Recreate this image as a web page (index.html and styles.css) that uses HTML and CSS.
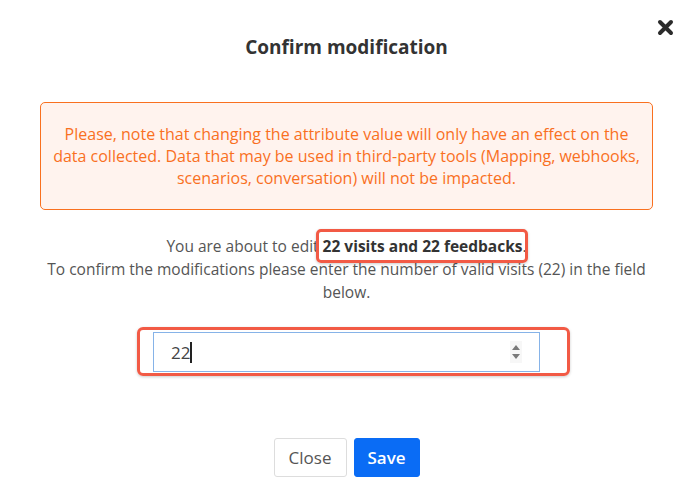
FILE: index.html
```html
<!DOCTYPE html>
<html lang="en">
<head>
  <meta charset="UTF-8">
  <meta name="viewport" content="width=device-width, initial-scale=1.0">
  <title>Confirm modification</title>
  <link rel="stylesheet" href="styles.css">
</head>
<body>
  <div class="modal">
    <button class="close-x" aria-label="Close">
      <svg width="17" height="17" viewBox="0 0 17 17">
        <path d="M3 3 L14 14 M14 3 L3 14" stroke="#2b2b2b" stroke-width="4" stroke-linecap="round"/>
      </svg>
    </button>
    <h2 class="title">Confirm modification</h2>

    <div class="alert">
      Please, note that changing the attribute value will only have an effect on the data collected. Data that may be used in third-party tools (Mapping, webhooks, scenarios, conversation) will not be impacted.
    </div>

    <p class="info">
      You are about to edit <span class="mark"><b>22 visits and 22 feedbacks</b></span>.<br>
      To confirm the modifications please enter the number of valid visits (22) in the field below.
    </p>

    <div class="field">
      <div class="field-mark">
        <div class="input">
          <span class="value">22</span><span class="caret"></span>
          <span class="spin">
            <svg width="10" height="18" viewBox="0 0 10 18">
              <path d="M5 2 L9 7 L1 7 Z M5 16 L9 11 L1 11 Z" fill="#7a7a7a"/>
            </svg>
          </span>
        </div>
      </div>
    </div>

    <div class="actions">
      <button class="btn btn-light">Close</button>
      <button class="btn btn-primary">Save</button>
    </div>
  </div>
</body>
</html>
```

FILE: styles.css
```css
body {
  margin: 0;
  background: #fff;
  font-family: "Open Sans", "Liberation Sans", sans-serif;
  color: #555;
}
.modal {
  position: relative;
  width: 690px;
  height: 492px;
  padding: 35px 37px 0 40px;
  box-sizing: border-box;
}
.close-x {
  position: absolute;
  top: 19px;
  right: 16px;
  padding: 0;
  border: none;
  background: none;
  cursor: pointer;
}
.title {
  margin: 0;
  font-size: 19px;
  line-height: 24px;
  font-weight: 700;
  color: #333;
  text-align: center;
}
.alert {
  margin-top: 43px;
  padding: 20px 5px;
  border: 1px solid #f9701f;
  border-radius: 5px;
  background: #fff3ee;
  color: #f9701f;
  font-size: 16px;
  line-height: 22px;
  text-align: center;
}
.info {
  margin: 25px 0 0;
  font-size: 15.5px;
  line-height: 23px;
  text-align: center;
  color: #555;
}
.info b {
  color: #333;
}
.mark {
  position: relative;
}
.mark::after {
  content: "";
  position: absolute;
  left: -7px;
  right: -5px;
  top: -6px;
  bottom: -6px;
  border: 3px solid #f25a45;
  border-radius: 5px;
  box-shadow: 0 1px 3px rgba(0, 0, 0, 0.2);
}
.field {
  display: flex;
  justify-content: center;
  margin-top: 23px;
}
.field-mark {
  margin-left: 14px;
  padding: 2px 27px 1px 13px;
  border: 3px solid #f25a45;
  border-radius: 6px;
  box-shadow: 0 1px 3px rgba(0, 0, 0, 0.2);
}
.input {
  display: flex;
  align-items: center;
  width: 387px;
  height: 40px;
  padding: 0 17px 0 17px;
  box-sizing: border-box;
  border: 1px solid #86b3e8;
  font-size: 17px;
  color: #444;
}
.caret {
  width: 2px;
  height: 21px;
  background: #222;
}
.spin {
  display: flex;
  margin-left: auto;
  padding: 2px 1px;
  background: #f7f7f7;
}
.actions {
  display: flex;
  justify-content: center;
  gap: 7px;
  margin-top: 62px;
}
.btn {
  height: 39px;
  padding: 0;
  font-family: "Open Sans", "Liberation Sans", sans-serif;
  font-size: 17px;
  border-radius: 3px;
  cursor: pointer;
}
.btn-light {
  width: 73px;
  background: #fff;
  border: 1px solid #ddd;
  color: #555;
}
.btn-primary {
  width: 66px;
  background: #0a6cf5;
  border: 1px solid #0a6cf5;
  color: #fff;
  font-weight: 600;
}
```
